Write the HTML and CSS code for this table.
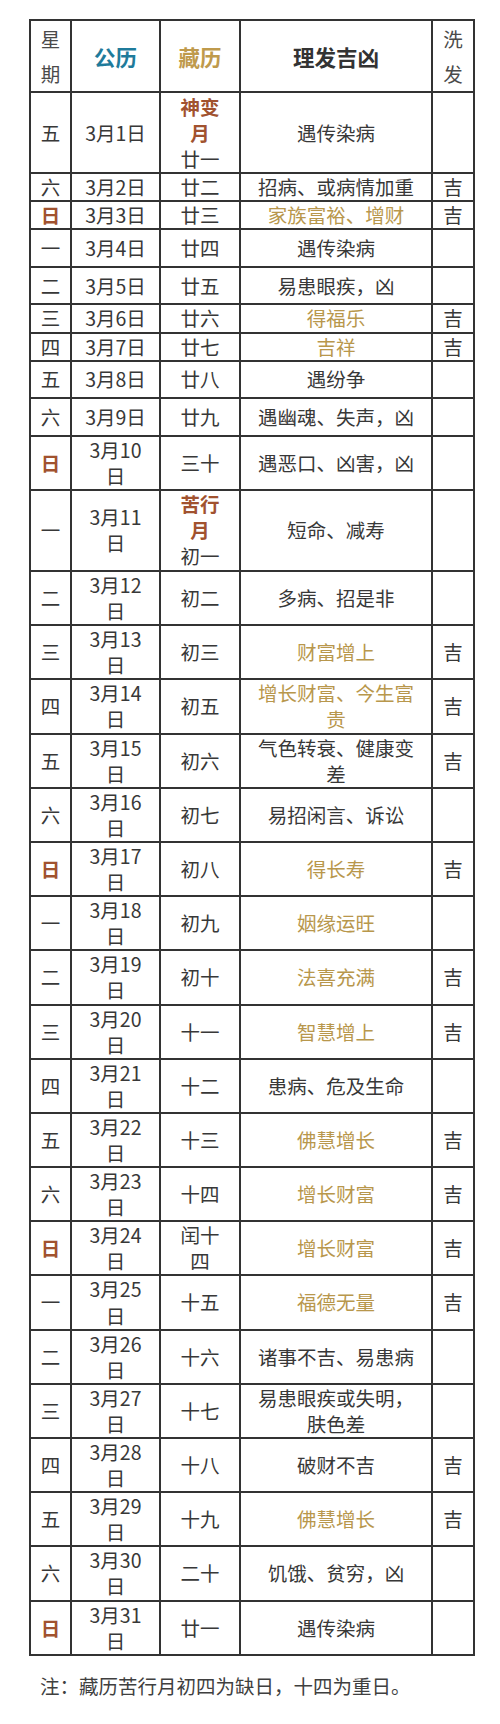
FILE: index.html
```html
<!DOCTYPE html>
<html lang="zh">
<head>
<meta charset="utf-8">
<title>理发吉凶</title>
<link rel="stylesheet" href="styles.css">
</head>
<body>
<main class="page">
<table class="cal">
<colgroup>
<col class="c-day"><col class="c-date"><col class="c-tib"><col class="c-desc"><col class="c-wash">
</colgroup>
<thead>
<tr>
<th class="narrow plain">星期</th>
<th class="hd-blue">公历</th>
<th class="hd-gold">藏历</th>
<th class="hd-dark">理发吉凶</th>
<th class="narrow plain">洗发</th>
</tr>
</thead>
<tbody>
<tr class="tri"><td class="narrow">五</td><td>3月1日</td><td><span class="red">神变月</span><br>廿一</td><td>遇传染病</td><td class="narrow"></td></tr>
<tr><td class="narrow">六</td><td>3月2日</td><td>廿二</td><td>招病、或病情加重</td><td class="narrow">吉</td></tr>
<tr><td class="narrow red">日</td><td>3月3日</td><td>廿三</td><td class="gold">家族富裕、增财</td><td class="narrow">吉</td></tr>
<tr class="pad"><td class="narrow">一</td><td>3月4日</td><td>廿四</td><td>遇传染病</td><td class="narrow"></td></tr>
<tr class="pad"><td class="narrow">二</td><td>3月5日</td><td>廿五</td><td>易患眼疾，凶</td><td class="narrow"></td></tr>
<tr><td class="narrow">三</td><td>3月6日</td><td>廿六</td><td class="gold">得福乐</td><td class="narrow">吉</td></tr>
<tr><td class="narrow">四</td><td>3月7日</td><td>廿七</td><td class="gold">吉祥</td><td class="narrow">吉</td></tr>
<tr class="pad"><td class="narrow">五</td><td>3月8日</td><td>廿八</td><td>遇纷争</td><td class="narrow"></td></tr>
<tr class="pad"><td class="narrow">六</td><td>3月9日</td><td>廿九</td><td>遇幽魂、失声，凶</td><td class="narrow"></td></tr>
<tr><td class="narrow red">日</td><td>3月10日</td><td>三十</td><td>遇恶口、凶害，凶</td><td class="narrow"></td></tr>
<tr class="tri"><td class="narrow">一</td><td>3月11日</td><td><span class="red">苦行月</span><br>初一</td><td>短命、减寿</td><td class="narrow"></td></tr>
<tr><td class="narrow">二</td><td>3月12日</td><td>初二</td><td>多病、招是非</td><td class="narrow"></td></tr>
<tr><td class="narrow">三</td><td>3月13日</td><td>初三</td><td class="gold">财富增上</td><td class="narrow">吉</td></tr>
<tr><td class="narrow">四</td><td>3月14日</td><td>初五</td><td class="gold">增长财富、今生富贵</td><td class="narrow">吉</td></tr>
<tr><td class="narrow">五</td><td>3月15日</td><td>初六</td><td>气色转衰、健康变差</td><td class="narrow">吉</td></tr>
<tr><td class="narrow">六</td><td>3月16日</td><td>初七</td><td>易招闲言、诉讼</td><td class="narrow"></td></tr>
<tr><td class="narrow red">日</td><td>3月17日</td><td>初八</td><td class="gold">得长寿</td><td class="narrow">吉</td></tr>
<tr><td class="narrow">一</td><td>3月18日</td><td>初九</td><td class="gold">姻缘运旺</td><td class="narrow"></td></tr>
<tr><td class="narrow">二</td><td>3月19日</td><td>初十</td><td class="gold">法喜充满</td><td class="narrow">吉</td></tr>
<tr><td class="narrow">三</td><td>3月20日</td><td>十一</td><td class="gold">智慧增上</td><td class="narrow">吉</td></tr>
<tr><td class="narrow">四</td><td>3月21日</td><td>十二</td><td>患病、危及生命</td><td class="narrow"></td></tr>
<tr><td class="narrow">五</td><td>3月22日</td><td>十三</td><td class="gold">佛慧增长</td><td class="narrow">吉</td></tr>
<tr><td class="narrow">六</td><td>3月23日</td><td>十四</td><td class="gold">增长财富</td><td class="narrow">吉</td></tr>
<tr><td class="narrow red">日</td><td>3月24日</td><td>闰十四</td><td class="gold">增长财富</td><td class="narrow">吉</td></tr>
<tr><td class="narrow">一</td><td>3月25日</td><td>十五</td><td class="gold">福德无量</td><td class="narrow">吉</td></tr>
<tr><td class="narrow">二</td><td>3月26日</td><td>十六</td><td>诸事不吉、易患病</td><td class="narrow"></td></tr>
<tr><td class="narrow">三</td><td>3月27日</td><td>十七</td><td>易患眼疾或失明，肤色差</td><td class="narrow"></td></tr>
<tr><td class="narrow">四</td><td>3月28日</td><td>十八</td><td>破财不吉</td><td class="narrow">吉</td></tr>
<tr><td class="narrow">五</td><td>3月29日</td><td>十九</td><td class="gold">佛慧增长</td><td class="narrow">吉</td></tr>
<tr><td class="narrow">六</td><td>3月30日</td><td>二十</td><td>饥饿、贫穷，凶</td><td class="narrow"></td></tr>
<tr><td class="narrow red">日</td><td>3月31日</td><td>廿一</td><td>遇传染病</td><td class="narrow"></td></tr>
</tbody>
</table>
<p class="note">注：藏历苦行月初四为缺日，十四为重日。</p>
</main>
</body>
</html>
```
FILE: styles.css
```css
html, body {
  margin: 0;
  padding: 0;
  background: #ffffff;
}
.page {
  padding: 19px 28px 0 29px;
  font-family: "Noto Sans CJK SC", "Noto Sans", sans-serif;
  color: #383838;
}
.cal {
  border-collapse: collapse;
  table-layout: fixed;
  width: 444px;
  font-size: 19.5px;
}
.c-day { width: 41px; }
.c-date { width: 89px; }
.c-tib { width: 80px; }
.c-desc { width: 192px; }
.c-wash { width: 42px; }
.cal th,
.cal td {
  border: 2px solid #333333;
  padding: 0 12px;
  text-align: center;
  vertical-align: middle;
  line-height: 26.1px;
  word-break: break-all;
}
.cal th {
  font-size: 21.5px;
  line-height: 35px;
  padding-top: 0.5px;
  padding-bottom: 0.5px;
  font-weight: 700;
}
.cal th.plain {
  font-size: 19.5px;
  font-weight: 400;
  color: #4a4a4a;
}
.cal .narrow {
  padding: 0 3px;
}
.hd-blue { color: #1f7b9b; }
.hd-gold { color: #bf9a4c; }
.hd-dark { color: #333333; }
.cal tr.pad td {
  padding-top: 4.7px;
  padding-bottom: 4.7px;
}
.cal tr.tri td {
  padding-top: 0.5px;
  padding-bottom: 0.5px;
}
.red {
  color: #a1522f;
  font-weight: 700;
}
.gold {
  color: #b8974c;
}
.note {
  margin: 16px 0 0 11px;
  font-size: 19.5px;
  line-height: 27px;
  color: #3f3f3f;
}
```
